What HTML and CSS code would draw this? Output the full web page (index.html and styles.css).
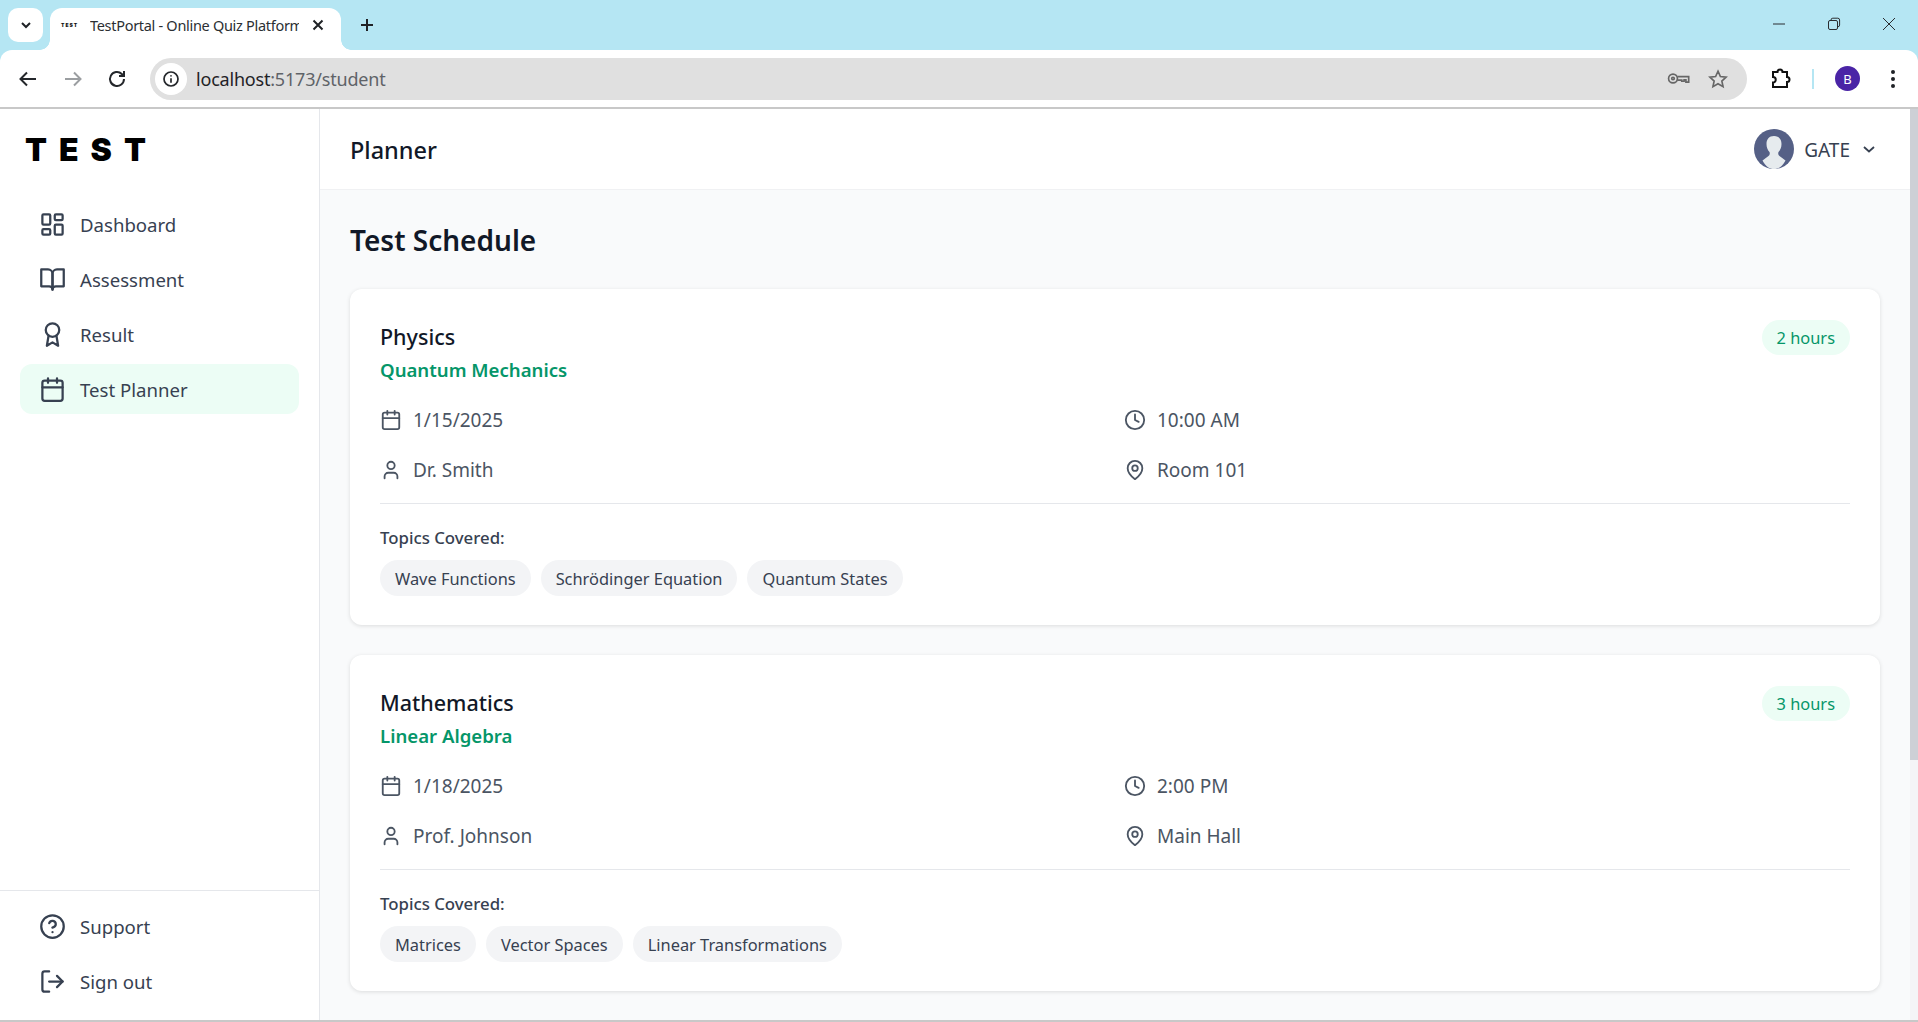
FILE: index.html
```html
<!DOCTYPE html>
<html lang="en">
<head>
<meta charset="utf-8">
<title>TestPortal - Online Quiz Platform</title>
<link rel="stylesheet" href="styles.css">
</head>
<body>
<svg class="defs" width="0" height="0" aria-hidden="true">
  <symbol id="i-dash" viewBox="0 0 24 24"><rect x="3" y="3" width="7" height="9" rx="1"/><rect x="14" y="3" width="7" height="5" rx="1"/><rect x="14" y="12" width="7" height="9" rx="1"/><rect x="3" y="16" width="7" height="5" rx="1"/></symbol>
  <symbol id="i-book" viewBox="0 0 24 24"><path d="M2 3h6a4 4 0 0 1 4 4v14a3 3 0 0 0-3-3H2z"/><path d="M22 3h-6a4 4 0 0 0-4 4v14a3 3 0 0 1 3-3h7z"/></symbol>
  <symbol id="i-award" viewBox="0 0 24 24"><circle cx="12" cy="8" r="6"/><path d="M15.477 12.89 17 22l-5-3-5 3 1.523-9.11"/></symbol>
  <symbol id="i-cal" viewBox="0 0 24 24"><rect x="3" y="4" width="18" height="18" rx="2"/><path d="M16 2v4M8 2v4M3 10h18"/></symbol>
  <symbol id="i-help" viewBox="0 0 24 24"><circle cx="12" cy="12" r="10"/><path d="M9.09 9a3 3 0 0 1 5.83 1c0 2-3 3-3 3"/><path d="M12 17h.01"/></symbol>
  <symbol id="i-out" viewBox="0 0 24 24"><path d="M9 21H5a2 2 0 0 1-2-2V5a2 2 0 0 1 2-2h4"/><path d="m16 17 5-5-5-5"/><path d="M21 12H9"/></symbol>
  <symbol id="i-clock" viewBox="0 0 24 24"><circle cx="12" cy="12" r="10"/><path d="M12 6v6l4 2"/></symbol>
  <symbol id="i-pin" viewBox="0 0 24 24"><path d="M20 10c0 6-8 12-8 12s-8-6-8-12a8 8 0 0 1 16 0Z"/><circle cx="12" cy="10" r="3"/></symbol>
  <symbol id="i-user" viewBox="0 0 24 24"><path d="M19 21v-2a4 4 0 0 0-4-4H9a4 4 0 0 0-4 4v2"/><circle cx="12" cy="7" r="4"/></symbol>
</svg>

<div class="browser">
  <div class="tabstrip">
    <div class="tabmenu">
      <svg class="ic-14" viewBox="0 0 14 14"><path d="M3 5l4 4 4-4"/></svg>
    </div>
    <div class="tab">
      <span class="favicon">TEST</span>
      <span class="tabtitle">TestPortal - Online Quiz Platform</span>
      <svg class="ic-14 tabclose" viewBox="0 0 14 14"><path d="M2.5 2.5l9 9M11.500 2.500l-9 9"/></svg>
    </div>
    <svg class="newtab" viewBox="0 0 16 16"><path d="M8 2v12M2 8h12"/></svg>
    <div class="winctrls">
      <svg class="winbtn" viewBox="0 0 16 16"><path d="M2 8h12"/></svg>
      <svg class="winbtn" viewBox="0 0 16 16"><rect x="2.500" y="4.500" width="9" height="9" rx="1.500"/><path d="M5 4.500V4a1.800 1.800 0 0 1 1.800-1.800h5A1.800 1.800 0 0 1 13.600 4v5a1.800 1.800 0 0 1-1.800 1.800h-.3"/></svg>
      <svg class="winbtn" viewBox="0 0 16 16"><path d="M2 2l12 12M14 2L2 14"/></svg>
    </div>
  </div>
  <div class="toolbar">
    <svg class="tb-ic" viewBox="0 0 24 24"><path d="M20 12H5M11 5.500 4.500 12l6.500 6.500"/></svg>
    <svg class="tb-ic tb-dim" viewBox="0 0 24 24"><path d="M4 12h15M13 5.500l6.500 6.500-6.500 6.500"/></svg>
    <svg class="tb-ic" viewBox="0 0 24 24"><path d="M19 12a7 7 0 1 1-2.200-5.100L19 9M19 4v5h-5"/></svg>
    <div class="omnibox">
      <span class="infobtn"><svg viewBox="0 0 18 18"><circle cx="9" cy="9" r="7"/><path d="M9 8.200v4.500M9 5.200v1.300"/></svg></span>
      <span class="url">localhost<span class="url-rest">:5173/student</span></span>
      <svg class="key" viewBox="0 0 26 16"><circle cx="6.500" cy="8" r="4.800"/><circle cx="6.500" cy="8" r="1.400"/><path d="M11.300 6h12.200v6h-3V9.500h-2V11h-2.500V9.800h-4.700"/></svg>
      <svg class="star" viewBox="0 0 24 24"><path d="M12 3.500l2.600 5.800 6.200.7-4.600 4.200 1.300 6.200L12 17.200l-5.500 3.200 1.300-6.200L3.200 10l6.200-.7z"/></svg>
    </div>
    <svg class="puzzle" viewBox="0 0 24 24"><path d="M5 5h4.500a2.500 2.500 0 0 1 5 0H19v5a2.500 2.500 0 0 1 0 5v5H5v-4.500a2.500 2.500 0 0 0 0-5.500z"/></svg>
    <span class="tb-sep"></span>
    <span class="profile">B</span>
    <svg class="kebab" viewBox="0 0 6 22"><circle cx="3" cy="4" r="2"/><circle cx="3" cy="11" r="2"/><circle cx="3" cy="18" r="2"/></svg>
  </div>
</div>

<div class="app">
  <aside class="sidebar">
    <div class="logo">TEST</div>
    <nav class="nav">
      <a class="nav-item"><svg class="ic"><use href="#i-dash"/></svg>Dashboard</a>
      <a class="nav-item"><svg class="ic"><use href="#i-book"/></svg>Assessment</a>
      <a class="nav-item"><svg class="ic"><use href="#i-award"/></svg>Result</a>
      <a class="nav-item active"><svg class="ic"><use href="#i-cal"/></svg>Test Planner</a>
    </nav>
    <div class="nav-foot">
      <a class="nav-item"><svg class="ic"><use href="#i-help"/></svg>Support</a>
      <a class="nav-item"><svg class="ic"><use href="#i-out"/></svg>Sign out</a>
    </div>
  </aside>
  <div class="main">
    <header class="topbar">
      <h1 class="page-title">Planner</h1>
      <div class="account">
        <svg class="avatar" viewBox="0 0 40 40">
          <circle class="av-bg" cx="20" cy="20" r="20"/>
          <path class="av-fg" d="M20 7c-5 0-7.500 3.500-7.500 8 0 3.500 1.200 6 3 8 .6 1.500.2 3-1 4l-6 4.500C11.500 37.500 15.500 40 20 40s8.500-2.500 11.500-8.500l-6-4.500c-1.200-1-1.600-2.500-1-4 1.800-2 3-4.500 3-8 0-4.500-2.500-8-7.500-8z"/>
        </svg>
        <span class="account-name">GATE</span>
        <svg class="chev" viewBox="0 0 14 14"><path d="M2 5l5 4.500L12 5"/></svg>
      </div>
    </header>
    <main class="content">
      <h2 class="section-title">Test Schedule</h2>

      <article class="card">
        <div class="card-head">
          <div>
            <h3 class="subject">Physics</h3>
            <p class="topic">Quantum Mechanics</p>
          </div>
          <span class="badge">2 hours</span>
        </div>
        <div class="meta">
          <div class="meta-item"><svg class="ic-m"><use href="#i-cal"/></svg>1/15/2025</div>
          <div class="meta-item"><svg class="ic-m"><use href="#i-clock"/></svg>10:00 AM</div>
          <div class="meta-item"><svg class="ic-m"><use href="#i-user"/></svg>Dr. Smith</div>
          <div class="meta-item"><svg class="ic-m"><use href="#i-pin"/></svg>Room 101</div>
        </div>
        <div class="topics">
          <div class="topics-label">Topics Covered:</div>
          <div class="chips">
            <span class="chip">Wave Functions</span>
            <span class="chip">Schrödinger Equation</span>
            <span class="chip">Quantum States</span>
          </div>
        </div>
      </article>

      <article class="card">
        <div class="card-head">
          <div>
            <h3 class="subject">Mathematics</h3>
            <p class="topic">Linear Algebra</p>
          </div>
          <span class="badge">3 hours</span>
        </div>
        <div class="meta">
          <div class="meta-item"><svg class="ic-m"><use href="#i-cal"/></svg>1/18/2025</div>
          <div class="meta-item"><svg class="ic-m"><use href="#i-clock"/></svg>2:00 PM</div>
          <div class="meta-item"><svg class="ic-m"><use href="#i-user"/></svg>Prof. Johnson</div>
          <div class="meta-item"><svg class="ic-m"><use href="#i-pin"/></svg>Main Hall</div>
        </div>
        <div class="topics">
          <div class="topics-label">Topics Covered:</div>
          <div class="chips">
            <span class="chip">Matrices</span>
            <span class="chip">Vector Spaces</span>
            <span class="chip">Linear Transformations</span>
          </div>
        </div>
      </article>
    </main>
  </div>
  <div class="scrollbar"><div class="thumb"></div></div>
</div>
</body>
</html>
```
FILE: styles.css
```css
* { box-sizing: border-box; }
html, body { margin: 0; height: 100%; overflow: hidden; }
body {
  font-family: "Noto Sans", "Open Sans", sans-serif;
  color: #111827;
  background: #fff;
  display: flex;
  flex-direction: column;
  height: 1022px;
}
.defs { position: absolute; }
h1, h2, h3, p { margin: 0; }

/* Browser chrome */
.browser { flex: 0 0 109px; display: flex; flex-direction: column; border-bottom: 2px solid #c8c8c8; background: #b5e6f3; }
.tabstrip { flex: 0 0 50px; background: #b5e6f3; display: flex; align-items: flex-start; padding: 8px 0 0 8px; }
.tabmenu { width: 35px; height: 34px; background: #fff; border-radius: 10px; display: flex; align-items: center; justify-content: center; }
.ic-14 { width: 14px; height: 14px; fill: none; stroke: #1f2226; stroke-width: 2; }
.tab { position: relative; width: 291px; height: 42px; margin-left: 7px; background: #fff; border-radius: 12px 12px 0 0; display: flex; align-items: center; padding: 0 16px 8px 11px; }
.tab::before, .tab::after { content: ""; position: absolute; bottom: 0; width: 10px; height: 10px; }
.tab::before { left: -10px; background: radial-gradient(circle at 0 0, #b5e6f3 9.500px, #fff 10px); }
.tab::after { right: -10px; background: radial-gradient(circle at 100% 0, #b5e6f3 9.500px, #fff 10px); }
.favicon { width: 20px; font-family: "Inter", sans-serif; font-weight: 900; font-size: 5px; letter-spacing: 1px; color: #111; flex: none; }
.tabtitle { margin-left: 9px; width: 209px; font-size: 14.500px; color: #2b2f33; white-space: nowrap; overflow: hidden; flex: none; letter-spacing: -0.300px; }
.tabclose { margin-left: auto; }
.newtab { width: 16px; height: 16px; margin: 9px 0 0 18px; fill: none; stroke: #1f2226; stroke-width: 2; flex: none; }
.winctrls { margin-left: auto; display: flex; gap: 39px; padding: 8px 21px 0 0; }
.winbtn { width: 16px; height: 16px; fill: none; stroke: #2a2d30; stroke-width: 1; }

.toolbar { flex: 1; background: #fff; display: flex; align-items: center; padding: 0 14px 0 16px; border-radius: 12px 12px 0 0; }
.tb-ic { width: 24px; height: 24px; flex: none; margin-right: 20.500px; fill: none; stroke: #24272b; stroke-width: 2; }
.tb-dim { stroke: #9b9ea1; }
.omnibox { width: 1597px; height: 42px; margin-left: 0.500px; background: #e0e0e0; border-radius: 21px; display: flex; align-items: center; padding: 0 18.500px 0 5px; flex: none; }
.infobtn { width: 32px; height: 32px; border-radius: 50%; background: #fff; display: flex; align-items: center; justify-content: center; flex: none; }
.infobtn svg { width: 18px; height: 18px; fill: none; stroke: #24272b; stroke-width: 1.700; }
.url { margin-left: 9px; font-size: 18px; color: #1f2226; letter-spacing: -0.200px; }
.url-rest { color: #5f6368; }
.key { width: 24px; height: 15px; margin-left: auto; fill: none; stroke: #666; stroke-width: 1.800; }
.star { width: 22px; height: 22px; margin-left: 16px; fill: none; stroke: #666; stroke-width: 1.800; }
.puzzle { width: 24px; height: 24px; margin-left: 21px; flex: none; fill: none; stroke: #111; stroke-width: 2; }
.tb-sep { width: 2px; height: 20px; background: #b5e6f3; margin-left: 19.500px; flex: none; }
.profile { width: 25px; height: 25px; border-radius: 50%; background: #4a24a6; color: #fff; font-size: 13px; display: flex; align-items: center; justify-content: center; margin-left: 21.500px; flex: none; }
.kebab { width: 6px; height: 22px; margin-left: 29.500px; fill: #1f2226; flex: none; }

/* App */
.app { flex: 1; min-height: 0; display: flex; border-bottom: 2px solid #c8c8c8; }
.sidebar { flex: 0 0 320px; border-right: 1px solid #e5e7eb; display: flex; flex-direction: column; background: #fff; }
.logo { height: 90px; padding: 23px 0 0 25px; font-family: "Inter", sans-serif; font-weight: 900; font-size: 32px; letter-spacing: 12px; line-height: 36px; color: #000; }
.nav { padding: 0 20px; display: flex; flex-direction: column; gap: 5px; flex: 1; }
.nav-foot { border-top: 1px solid #e5e7eb; padding: 10px 20px 14px; display: flex; flex-direction: column; gap: 5px; }
.nav-item { height: 50px; display: flex; align-items: center; gap: 14px; padding: 0 19px; border-radius: 12px; font-size: 18.600px; color: #374151; }
.nav-item.active { background: #ecfdf5; }
.ic { width: 27px; height: 27px; flex: none; fill: none; stroke: #374151; stroke-width: 2; stroke-linecap: round; stroke-linejoin: round; }

.main { flex: 1; min-width: 0; display: flex; flex-direction: column; background: #f9fafb; }
.topbar { flex: 0 0 81px; background: #fff; border-bottom: 1px solid #f0f1f3; display: flex; align-items: center; justify-content: space-between; padding: 0 32px 0 30px; }
.page-title { font-size: 23.500px; font-weight: 500; color: #111827; padding-top: 2px; }
.account { display: flex; align-items: center; }
.avatar { width: 40px; height: 40px; }
.av-bg { fill: #556086; }
.av-fg { fill: #e6ebee; }
.account-name { margin-left: 10px; font-size: 19px; color: #374151; padding-top: 1px; }
.chev { width: 14px; height: 14px; margin-left: 12px; margin-right: 2px; fill: none; stroke: #374151; stroke-width: 1.800; }

.content { flex: 1; padding: 30px 30px 0; display: flex; flex-direction: column; gap: 30px; overflow: hidden; }
.section-title { font-size: 28px; font-weight: 600; color: #111827; line-height: 40px; margin-bottom: -1px; }
.card { flex: none; background: #fff; border-radius: 12px; padding: 31px 30px 0; box-shadow: 0 1px 4px rgba(0,0,0,.12); height: 336px; }
.card-head { display: flex; justify-content: space-between; align-items: flex-start; }
.subject { font-size: 21.500px; font-weight: 500; color: #111827; line-height: 34px; }
.topic { font-size: 18.600px; font-weight: 600; color: #059669; line-height: 32px; }
.badge { background: #ecfdf5; color: #059669; font-size: 16.400px; height: 35px; padding: 0 15px; border-radius: 18px; display: flex; align-items: center; }
.meta { display: grid; grid-template-columns: 1fr 1fr; gap: 14px 18px; margin-top: 16px; }
.meta-item { display: flex; align-items: center; gap: 11px; font-size: 19px; color: #4b5563; line-height: 36px; }
.ic-m { width: 22px; height: 22px; flex: none; fill: none; stroke: #4b5563; stroke-width: 2; stroke-linecap: round; stroke-linejoin: round; }
.topics { margin-top: 15px; border-top: 1px solid #e5e7eb; padding-top: 21px; }
.topics-label { font-size: 16.800px; font-weight: 500; color: #374151; line-height: 26px; }
.chips { display: flex; gap: 10px; margin-top: 9px; }
.chip { height: 36px; display: flex; align-items: center; padding: 0 15px; border-radius: 18px; background: #f3f4f6; font-size: 16.400px; color: #374151; }

.scrollbar { flex: 0 0 8px; background: #f4f5f7; }
.thumb { height: 651px; background: #cdd0d6; }
```
